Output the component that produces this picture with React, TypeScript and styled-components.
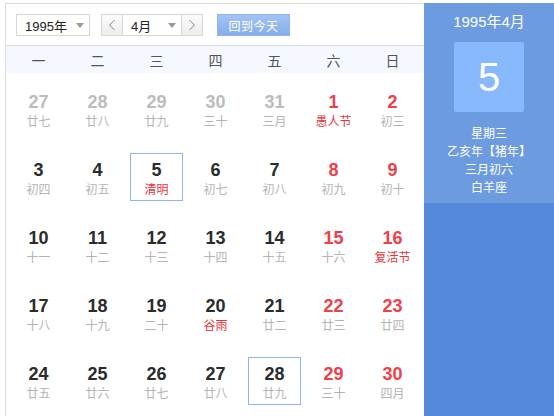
import React from "react";
import styled, { createGlobalStyle } from "styled-components";

const GlobalStyle = createGlobalStyle`
  html, body {
    margin: 0;
    padding: 0;
    background: #ffffff;
  }
  body {
    font-family: "Liberation Sans", "Noto Sans CJK SC", sans-serif;
  }
`;

type Tone = "normal" | "muted" | "red";

interface IDay {
  day: number;
  lunar: string;
  tone: Tone;
  lunarRed?: boolean;
  boxed?: boolean;
}

const weekdays = ["一", "二", "三", "四", "五", "六", "日"];

const d = (day: number, lunar: string, tone: Tone, lunarRed = false, boxed = false): IDay => ({
  day,
  lunar,
  tone,
  lunarRed,
  boxed,
});

const days: IDay[] = [
  d(27, "廿七", "muted"),
  d(28, "廿八", "muted"),
  d(29, "廿九", "muted"),
  d(30, "三十", "muted"),
  d(31, "三月", "muted"),
  d(1, "愚人节", "red", true),
  d(2, "初三", "red"),
  d(3, "初四", "normal"),
  d(4, "初五", "normal"),
  d(5, "清明", "normal", true, true),
  d(6, "初七", "normal"),
  d(7, "初八", "normal"),
  d(8, "初九", "red"),
  d(9, "初十", "red"),
  d(10, "十一", "normal"),
  d(11, "十二", "normal"),
  d(12, "十三", "normal"),
  d(13, "十四", "normal"),
  d(14, "十五", "normal"),
  d(15, "十六", "red"),
  d(16, "复活节", "red", true),
  d(17, "十八", "normal"),
  d(18, "十九", "normal"),
  d(19, "二十", "normal"),
  d(20, "谷雨", "normal", true),
  d(21, "廿二", "normal"),
  d(22, "廿三", "red"),
  d(23, "廿四", "red"),
  d(24, "廿五", "normal"),
  d(25, "廿六", "normal"),
  d(26, "廿七", "normal"),
  d(27, "廿八", "normal"),
  d(28, "廿九", "normal", false, true),
  d(29, "三十", "red"),
  d(30, "四月", "red"),
];

const Page = styled.div`
  display: flex;
  margin: 3px 0 0 5px;
  width: 549px;
  height: 413px;
`;

const Main = styled.div`
  width: 418px;
  border-top: 1px solid #dcdcdc;
  border-left: 1px solid #dcdcdc;
  display: flex;
  flex-direction: column;
`;

const Toolbar = styled.div`
  height: 42px;
  box-sizing: border-box;
  padding: 10px 0 0 10px;
  display: flex;
  align-items: flex-start;
  border-bottom: 1px solid #dcdcdc;
`;

const Select = styled.div<{ w: number }>`
  width: ${(p) => p.w}px;
  height: 22px;
  box-sizing: border-box;
  border: 1px solid #d8d8d8;
  background: #fff;
  display: flex;
  align-items: center;
  justify-content: space-between;
  padding: 0 5px 0 8px;
  font-size: 13px;
  color: #222;
`;

const Caret = styled.span`
  width: 0;
  height: 0;
  border-left: 4px solid transparent;
  border-right: 4px solid transparent;
  border-top: 5px solid #999;
`;

const Arrow = styled.div`
  width: 22px;
  height: 22px;
  box-sizing: border-box;
  border: 1px solid #d8d8d8;
  background: linear-gradient(#fbfbfb, #ededed);
  display: flex;
  align-items: center;
  justify-content: center;
`;

const MonthGroup = styled.div`
  display: flex;
  margin-left: 11px;
  & > ${Select} {
    border-left: none;
    border-right: none;
  }
`;

const TodayButton = styled.div`
  margin-left: 14px;
  width: 73px;
  height: 22px;
  box-sizing: border-box;
  border: 1px solid #8fb3ea;
  background: linear-gradient(#a3c3f4, #84aeec);
  color: #fff;
  font-size: 12px;
  display: flex;
  align-items: center;
  justify-content: center;
  letter-spacing: 0.5px;
`;

const WeekHeader = styled.div`
  height: 27px;
  background: #f5f8ff;
  display: grid;
  grid-template-columns: repeat(7, 59px);
  padding-left: 3px;
`;

const WeekDay = styled.div`
  display: flex;
  align-items: center;
  justify-content: center;
  font-size: 14px;
  color: #555;
  font-family: "Noto Sans CJK SC", sans-serif;
`;

const Grid = styled.div`
  display: grid;
  grid-template-columns: repeat(7, 59px);
  grid-auto-rows: 68px;
  padding-left: 3px;
`;

const Cell = styled.div`
  display: flex;
  justify-content: center;
  padding-top: 12px;
  box-sizing: border-box;
`;

const DayBox = styled.div<{ boxed: boolean }>`
  width: 53px;
  height: 48px;
  box-sizing: border-box;
  border: 1px solid ${(p) => (p.boxed ? "#8cb4ee" : "transparent")};
  display: flex;
  flex-direction: column;
  align-items: center;
  padding-top: 6px;
`;

const toneColor: Record<Tone, string> = {
  normal: "#2b2b2b",
  muted: "#bcbcbc",
  red: "#ee4048",
};

const DayNum = styled.div<{ tone: Tone }>`
  font-size: 18px;
  font-weight: bold;
  line-height: 20px;
  color: ${(p) => toneColor[p.tone]};
`;

const Lunar = styled.div<{ red: boolean }>`
  font-size: 12px;
  line-height: 18px;
  color: ${(p) => (p.red ? "#e8333b" : "#b4b4b4")};
  font-family: "Noto Sans CJK SC", sans-serif;
`;

const Side = styled.div`
  width: 130px;
  background: #5589db;
  display: flex;
  flex-direction: column;
`;

const SideTop = styled.div`
  height: 200px;
  background: #6d9be0;
  display: flex;
  flex-direction: column;
  align-items: center;
  color: #fff;
`;

const SideTitle = styled.div`
  margin-top: 10px;
  font-size: 15px;
  line-height: 18px;
  font-family: "Liberation Sans", "Noto Sans CJK SC", sans-serif;
`;

const BigDay = styled.div`
  margin-top: 11px;
  width: 70px;
  height: 70px;
  border-radius: 2px;
  background: #89b9fd;
  display: flex;
  align-items: center;
  justify-content: center;
  font-size: 40px;
  font-family: "Liberation Sans", sans-serif;
`;

const InfoLines = styled.div`
  margin-top: 12px;
  display: flex;
  flex-direction: column;
  align-items: center;
  font-size: 12px;
  line-height: 18px;
  font-family: "Noto Sans CJK SC", sans-serif;
`;

const Chevron: React.FC<{ dir: "left" | "right" }> = ({ dir }) => (
  <svg width="8" height="12" viewBox="0 0 8 12">
    <path
      d={dir === "left" ? "M6.5 1 L1.5 6 L6.5 11" : "M1.5 1 L6.5 6 L1.5 11"}
      fill="none"
      stroke="#888"
      strokeWidth="1"
    />
  </svg>
);

const App: React.FC = () => {
  return (
    <>
      <GlobalStyle />
      <Page>
        <Main>
          <Toolbar>
            <Select w={74}>
              <span>1995年</span>
              <Caret />
            </Select>
            <MonthGroup>
              <Arrow>
                <Chevron dir="left" />
              </Arrow>
              <Select w={58}>
                <span>4月</span>
                <Caret />
              </Select>
              <Arrow>
                <Chevron dir="right" />
              </Arrow>
            </MonthGroup>
            <TodayButton>回到今天</TodayButton>
          </Toolbar>
          <WeekHeader>
            {weekdays.map((w) => (
              <WeekDay key={w}>{w}</WeekDay>
            ))}
          </WeekHeader>
          <Grid>
            {days.map((item, i) => (
              <Cell key={i}>
                <DayBox boxed={!!item.boxed}>
                  <DayNum tone={item.tone}>{item.day}</DayNum>
                  <Lunar red={!!item.lunarRed}>{item.lunar}</Lunar>
                </DayBox>
              </Cell>
            ))}
          </Grid>
        </Main>
        <Side>
          <SideTop>
            <SideTitle>1995年4月</SideTitle>
            <BigDay>5</BigDay>
            <InfoLines>
              <div>星期三</div>
              <div>乙亥年【猪年】</div>
              <div>三月初六</div>
              <div>白羊座</div>
            </InfoLines>
          </SideTop>
        </Side>
      </Page>
    </>
  );
};

export default App;
